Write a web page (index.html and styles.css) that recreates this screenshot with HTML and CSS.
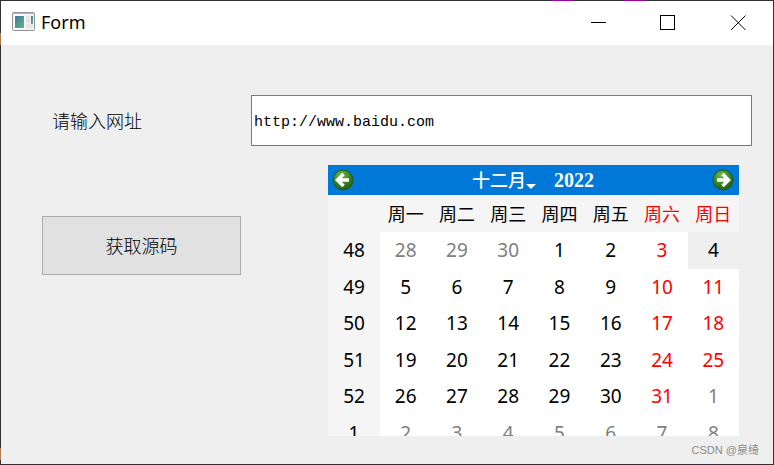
FILE: index.html
```html
<!DOCTYPE html>
<html lang="zh-CN">
<head>
<meta charset="utf-8">
<title>Form</title>
<link rel="stylesheet" href="styles.css">
</head>
<body>
<div class="window">
  <header class="titlebar">
    <svg class="app-icon" width="24" height="20" viewBox="0 0 24 20" aria-hidden="true">
      <defs>
        <linearGradient id="pane" x1="0" y1="0" x2="1" y2="1"><stop offset="0" stop-color="#3f74a8"/><stop offset="1" stop-color="#62bd78"/></linearGradient>
      </defs>
      <rect x="0.5" y="0.5" width="22" height="18" rx="1" fill="#f3f3f4" stroke="#8f9499"/>
      <path d="M1 1.500H22" stroke="#b4b8bc"/>
      <rect x="2.500" y="3.500" width="10" height="13" fill="url(#pane)" stroke="#fff"/>
      <rect x="14" y="4" width="4" height="7" fill="#e2e4e6"/>
      <rect x="14" y="12" width="7" height="4" fill="#e4e6e8"/>
      <rect x="19" y="4" width="2" height="8" fill="url(#pane)"/>
    </svg>
    <h1 class="title">Form</h1>
    <div class="window-controls">
      <button type="button" aria-label="最小化"><svg width="16" height="16" viewBox="0 0 16 16"><path d="M1 7.500H16" stroke="#000"/></svg></button>
      <button type="button" aria-label="最大化"><svg width="16" height="16" viewBox="0 0 16 16"><rect x="0.5" y="0.5" width="14" height="14" fill="none" stroke="#000"/></svg></button>
      <button type="button" aria-label="关闭"><svg width="16" height="16" viewBox="0 0 16 16"><path d="M1 0.500L15.500 15M15.500 0.500L1 15" stroke="#000"/></svg></button>
    </div>
  </header>
  <main class="form">
    <label class="url-label" for="url">请输入网址</label>
    <input class="url" id="url" type="text" value="http://www.baidu.com">
    <button class="fetch" type="button">获取源码</button>
    <section class="calendar" aria-label="日历">
      <div class="calendar-nav">
        <button type="button" aria-label="上个月">
          <svg width="22" height="22" viewBox="0 0 22 22"><defs><radialGradient id="green" cx="0.4" cy="0.25" r="0.8"><stop offset="0" stop-color="#72b84c"/><stop offset="0.55" stop-color="#39851f"/><stop offset="1" stop-color="#1b5a14"/></radialGradient></defs><circle cx="11" cy="11" r="10" fill="url(#green)" stroke="#1c5b1d"/><path d="M17 11H6M11.500 5L5.500 11L11.500 17" fill="none" stroke="#fff" stroke-width="3.500"/></svg>
        </button>
        <div class="period">
          <button class="month" type="button">十二月<svg width="10" height="6" viewBox="0 0 10 6" aria-hidden="true"><path d="M0 0H10L5 5Z" fill="#fff"/></svg></button>
          <button class="year" type="button">2022</button>
        </div>
        <button type="button" aria-label="下个月">
          <svg width="22" height="22" viewBox="0 0 22 22"><circle cx="11" cy="11" r="10" fill="url(#green)" stroke="#1c5b1d"/><path d="M5 11H16M10.500 5L16.500 11L10.500 17" fill="none" stroke="#fff" stroke-width="3.500"/></svg>
        </button>
      </div>
      <div class="days">
        <table>
          <colgroup><col class="week"><col span="7"></colgroup>
          <thead>
            <tr><td></td><th>周一</th><th>周二</th><th>周三</th><th>周四</th><th>周五</th><th class="rest">周六</th><th class="rest">周日</th></tr>
          </thead>
          <tbody>
            <tr><th>48</th><td class="other">28</td><td class="other">29</td><td class="other">30</td><td>1</td><td>2</td><td class="rest">3</td><td class="selected">4</td></tr>
            <tr><th>49</th><td>5</td><td>6</td><td>7</td><td>8</td><td>9</td><td class="rest">10</td><td class="rest">11</td></tr>
            <tr><th>50</th><td>12</td><td>13</td><td>14</td><td>15</td><td>16</td><td class="rest">17</td><td class="rest">18</td></tr>
            <tr><th>51</th><td>19</td><td>20</td><td>21</td><td>22</td><td>23</td><td class="rest">24</td><td class="rest">25</td></tr>
            <tr><th>52</th><td>26</td><td>27</td><td>28</td><td>29</td><td>30</td><td class="rest">31</td><td class="other">1</td></tr>
            <tr><th>1</th><td class="other">2</td><td class="other">3</td><td class="other">4</td><td class="other">5</td><td class="other">6</td><td class="other">7</td><td class="other">8</td></tr>
          </tbody>
        </table>
      </div>
    </section>
  </main>
  <footer class="credit">CSDN @泉绮</footer>
</div>
</body>
</html>
```
FILE: styles.css
```css
* {
  box-sizing: border-box;
}

body {
  margin: 0;
  min-height: 100vh;
  padding: 1px;
  display: flex;
  background:
    linear-gradient(#a000a0, #a000a0) 552px 0 / 22px 1px no-repeat,
    linear-gradient(#a000a0, #a000a0) 624px 0 / 22px 1px no-repeat,
    linear-gradient(#b07a50, #b07a50) 0 33px / 1px 12px no-repeat,
    linear-gradient(#b07a50, #b07a50) 0 448px / 1px 12px no-repeat,
    #303036;
  color: #000;
  font-family: "Noto Sans", "Noto Sans CJK SC", sans-serif;
}

button {
  padding: 0;
  border: 0;
  background: none;
  color: inherit;
  font: inherit;
}

svg {
  display: block;
}

.window {
  flex: 1;
  display: flex;
  flex-direction: column;
  background: #efefef;
}

.titlebar {
  height: 44px;
  display: flex;
  align-items: center;
  padding-left: 11px;
  gap: 5px;
  background: #fff;
}

.app-icon {
  margin-bottom: 2px;
}

.title {
  margin: 0 0 2px;
  font-size: 18px;
  font-weight: 400;
  line-height: 24px;
}

.window-controls {
  margin-left: auto;
  display: flex;
  align-self: stretch;
}

.window-controls button {
  width: 70px;
  display: flex;
  align-items: center;
  justify-content: center;
}

.form {
  display: grid;
  grid-template-columns: 199px 1fr;
  gap: 19px 10px;
  align-items: start;
  padding: 50px 21px 0 41px;
  font-size: 18px;
}

.url-label {
  align-self: center;
  padding: 0 0 2px 10px;
  font-weight: 300;
}

.url {
  width: 100%;
  height: 51px;
  padding: 4px 2px 0;
  border: 1px solid #7a7a7a;
  border-radius: 0;
  background: #fff;
  color: #000;
  font-family: "Liberation Mono", monospace;
  font-size: 15px;
}

.fetch {
  height: 59px;
  margin-top: 51px;
  padding-bottom: 2px;
  border: 1px solid #adadad;
  background: #e1e1e1;
  font-weight: 300;
}

.calendar {
  margin: 0 13px 0 77px;
}

.calendar-nav {
  height: 30px;
  display: flex;
  align-items: center;
  justify-content: space-between;
  padding: 0 5px 0 4px;
  background: #0078d7;
  color: #fff;
}

.period {
  display: flex;
  align-items: center;
  gap: 18px;
  line-height: 30px;
}

.month {
  display: flex;
  align-items: center;
  font-weight: 500;
}

.month svg {
  margin-top: 14px;
}

.year {
  font-family: "Liberation Serif", serif;
  font-size: 20px;
  font-weight: 700;
}

.days {
  height: 241px;
  overflow: hidden;
}

table {
  width: 100%;
  height: 256px;
  table-layout: fixed;
  border-collapse: collapse;
  background: #fff;
  line-height: 24px;
  text-align: center;
}

.week {
  width: 52px;
}

th,
td {
  padding: 0;
  font-weight: 400;
}

thead tr {
  height: 37px;
}

thead,
tbody th {
  background: #f5f5f5;
}

tbody {
  font-size: 19px;
}

.rest {
  color: #f00;
}

.other {
  color: #808080;
}

.selected {
  background: #efefef;
}

.credit {
  margin-top: auto;
  padding: 0 14px 5px 0;
  color: #8c8c8c;
  font-family: "Liberation Sans", "Noto Sans CJK SC", sans-serif;
  font-size: 11px;
  line-height: 18px;
  text-align: right;
}
```
